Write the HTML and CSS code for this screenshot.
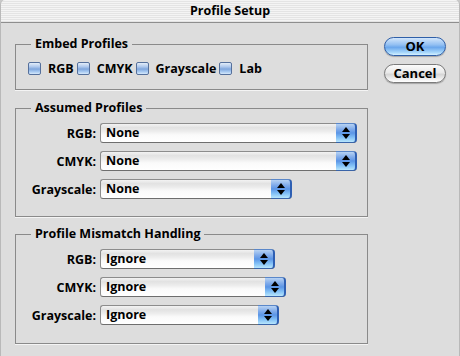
FILE: index.html
```html
<!DOCTYPE html>
<html lang="en">
  <head>
    <meta charset="UTF-8" />
    <title>Profile Setup</title>
    <link rel="stylesheet" href="styles.css">
  </head>
  <body>
    <div class="window">
      <div class="titlebar">Profile Setup</div>
      <div class="content">
        <div class="groups">
          <fieldset class="group group-embed">
            <legend>Embed Profiles</legend>
            <div class="checks">
              <label class="check"><span class="box"></span>RGB</label>
              <label class="check"><span class="box"></span>CMYK</label>
              <label class="check"><span class="box"></span>Grayscale</label>
              <label class="check"><span class="box"></span>Lab</label>
            </div>
          </fieldset>

          <fieldset class="group group-assumed">
            <legend>Assumed Profiles</legend>
            <div class="rows">
              <span class="row-label">RGB:</span>
              <div class="popup popup-full">
                <span class="popup-value">None</span>
                <span class="popup-arrows"></span>
              </div>
              <span class="row-label">CMYK:</span>
              <div class="popup popup-full">
                <span class="popup-value">None</span>
                <span class="popup-arrows"></span>
              </div>
              <span class="row-label">Grayscale:</span>
              <div class="popup popup-gray">
                <span class="popup-value">None</span>
                <span class="popup-arrows"></span>
              </div>
            </div>
          </fieldset>

          <fieldset class="group group-mismatch">
            <legend>Profile Mismatch Handling</legend>
            <div class="rows">
              <span class="row-label">RGB:</span>
              <div class="popup popup-rgb">
                <span class="popup-value">Ignore</span>
                <span class="popup-arrows"></span>
              </div>
              <span class="row-label">CMYK:</span>
              <div class="popup popup-cmyk">
                <span class="popup-value">Ignore</span>
                <span class="popup-arrows"></span>
              </div>
              <span class="row-label">Grayscale:</span>
              <div class="popup popup-ignore-gray">
                <span class="popup-value">Ignore</span>
                <span class="popup-arrows"></span>
              </div>
            </div>
          </fieldset>
        </div>

        <div class="buttons">
          <button type="button" class="btn btn-default">OK</button>
          <button type="button" class="btn">Cancel</button>
        </div>
      </div>
    </div>
  </body>
</html>
```

FILE: styles.css
```css
body {
  margin: 0;
  padding: 0;
  background-color: #c9c9c9;
  font-family: "Open Sans", "DejaVu Sans", sans-serif;
  font-weight: bold;
  font-size: 12.5px;
  color: #000;
}

.window {
  width: 460px;
  height: 356px;
  box-sizing: border-box;
  background-color: #dddddd;
  border-left: 1px solid #b9b9b9;
  border-right: 1px solid #b9b9b9;
  border-radius: 5px 5px 0 0;
  overflow: hidden;
}

.titlebar {
  height: 22px;
  line-height: 22px;
  text-align: center;
  font-size: 12.5px;
  border-bottom: 1px solid #8e8e8e;
  background: repeating-linear-gradient(
    to bottom,
    #f4f4f4 0,
    #f4f4f4 1px,
    #e4e4e4 1px,
    #e4e4e4 2px
  );
}

.content {
  display: flex;
  padding: 14px 0 0 14px;
}

.groups {
  width: 353px;
  display: flex;
  flex-direction: column;
  gap: 11px;
}

/* Group boxes */
.group {
  margin: 0;
  padding: 0;
  border: 1px solid #8a8a8a;
  box-shadow: 0 1px 0 #f4f4f4;
  min-width: 0;
}

.group legend {
  margin-left: 15px;
  padding: 0 4px;
  line-height: 14px;
  height: 14px;
}

.group-embed {
  padding-bottom: 14px;
}

.group-assumed {
  padding-bottom: 17px;
}

.group-mismatch {
  margin-top: -1px;
  padding-bottom: 18px;
}

/* Checkboxes */
.checks {
  display: flex;
  padding: 11px 0 0 12px;
  gap: 3px;
  height: 13px;
  line-height: 13px;
}

.check {
  display: flex;
  align-items: center;
  gap: 7px;
}

.box {
  width: 13px;
  height: 13px;
  box-sizing: border-box;
  border: 1px solid #55709c;
  border-radius: 2px;
  background: linear-gradient(
    to bottom,
    #e3edf9 0%,
    #adc7ec 35%,
    #7fa6dd 55%,
    #a9cbf2 80%,
    #d6e9fb 100%
  );
}

/* Popup menus */
.rows {
  display: grid;
  grid-template-columns: 80px auto;
  column-gap: 4px;
  row-gap: 8px;
  padding-top: 8px;
  justify-items: start;
  align-items: center;
}

.row-label {
  justify-self: end;
}

.popup {
  display: flex;
  height: 20px;
  box-sizing: border-box;
  border: 1px solid #8c8c8c;
  border-bottom-color: #6e6e6e;
  border-right: none;
  border-radius: 3px 4px 4px 3px;
  background: linear-gradient(
    to bottom,
    #f3f3f3 0%,
    #e2e2e2 20%,
    #ececec 40%,
    #fafafa 60%,
    #ffffff 100%
  );
}

.popup-full {
  width: 257px;
}

.popup-gray {
  width: 192px;
}

.popup-rgb {
  width: 175px;
}

.popup-cmyk {
  width: 186px;
}

.popup-ignore-gray {
  width: 179px;
}

.popup-value {
  flex: 1;
  padding-left: 5px;
  line-height: 18px;
}

.popup-arrows {
  position: relative;
  width: 21px;
  margin: -1px 0;
  border-radius: 0 4px 4px 0;
  border-right: 2px solid #2e5fb3;
  border-top: 1px solid #5a87c9;
  border-bottom: 1px solid #3a64a8;
  box-sizing: border-box;
  background: linear-gradient(
    to bottom,
    #b7d2f3 0%,
    #7eaaea 30%,
    #5b95e6 50%,
    #82c0f6 75%,
    #b8e6fd 100%
  );
}

.popup-arrows::before,
.popup-arrows::after {
  content: "";
  position: absolute;
  left: 6px;
  border-left: 4px solid transparent;
  border-right: 4px solid transparent;
}

.popup-arrows::before {
  top: 3px;
  border-bottom: 5px solid #000;
}

.popup-arrows::after {
  top: 10px;
  border-top: 5px solid #000;
}

/* Buttons */
.buttons {
  display: flex;
  flex-direction: column;
  gap: 8px;
  margin-left: 16px;
  padding-top: 0;
}

.btn {
  width: 62px;
  height: 19px;
  padding: 0;
  font-family: inherit;
  font-weight: bold;
  font-size: 13px;
  line-height: 17px;
  color: #000;
  border: 1px solid #7b7b7b;
  border-radius: 10px;
  background: linear-gradient(
    to bottom,
    #fbfbfb 0%,
    #e9e9e9 45%,
    #d6d6d6 55%,
    #f2f2f2 85%,
    #ffffff 100%
  );
  box-shadow: 0 1px 1px rgba(0, 0, 0, 0.25);
}

.btn-default {
  border-color: #2f5fa8;
  background: linear-gradient(
    to bottom,
    #d3e6fb 0%,
    #93c0f2 40%,
    #6ba7ec 55%,
    #a7d7fb 85%,
    #d5f1ff 100%
  );
}
```
